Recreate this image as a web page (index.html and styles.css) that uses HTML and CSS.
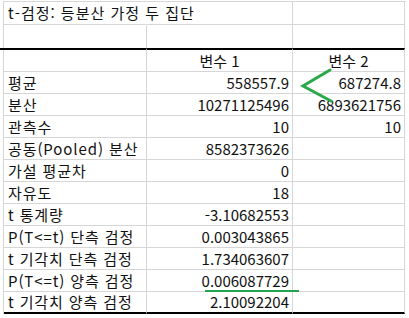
FILE: index.html
```html
<!DOCTYPE html>
<html lang="ko">
<head>
<meta charset="utf-8">
<link rel="stylesheet" href="styles.css">
</head>
<body>
<div class="sheet">
  <div class="cell title">t-검정: 등분산 가정 두 집단</div>
  <div class="cell"></div>
  <div class="cell"></div>

  <div class="cell gap"></div>
  <div class="cell gap"></div>
  <div class="cell gap"></div>

  <div class="cell head"></div>
  <div class="cell head center">변수 1</div>
  <div class="cell head center">변수 2</div>

  <div class="cell label">평균</div>
  <div class="cell num">558557.9</div>
  <div class="cell num">687274.8</div>

  <div class="cell label">분산</div>
  <div class="cell num">10271125496</div>
  <div class="cell num">6893621756</div>

  <div class="cell label">관측수</div>
  <div class="cell num">10</div>
  <div class="cell num">10</div>

  <div class="cell label">공동(Pooled) 분산</div>
  <div class="cell num">8582373626</div>
  <div class="cell"></div>

  <div class="cell label">가설 평균차</div>
  <div class="cell num">0</div>
  <div class="cell"></div>

  <div class="cell label">자유도</div>
  <div class="cell num">18</div>
  <div class="cell"></div>

  <div class="cell label">t 통계량</div>
  <div class="cell num">-3.10682553</div>
  <div class="cell"></div>

  <div class="cell label">P(T&lt;=t) 단측 검정</div>
  <div class="cell num">0.003043865</div>
  <div class="cell"></div>

  <div class="cell label">t 기각치 단측 검정</div>
  <div class="cell num">1.734063607</div>
  <div class="cell"></div>

  <div class="cell label">P(T&lt;=t) 양측 검정</div>
  <div class="cell num">0.006087729</div>
  <div class="cell"></div>

  <div class="cell label last">t 기각치 양측 검정</div>
  <div class="cell num last">2.10092204</div>
  <div class="cell last"></div>

  <svg class="mark-arrow" width="40" height="40" viewBox="0 0 40 40">
    <polyline points="30,2 3,18 31,33" fill="none" stroke="#2aa84a" stroke-width="3" stroke-linecap="round" stroke-linejoin="miter"/>
  </svg>
  <div class="mark-line"></div>
</div>
</body>
</html>
```

FILE: styles.css
```css
html, body {
  margin: 0;
  padding: 0;
  background: #ffffff;
}

body {
  font-family: "Noto Sans CJK KR", "Noto Sans", sans-serif;
  font-size: 15px;
  color: #111111;
}

.sheet {
  position: relative;
  display: grid;
  grid-template-columns: 143px 146px 112px;
  grid-auto-rows: 22px;
  grid-template-rows: 23px 23px 24px;
  margin: 1px 0 0 3px;
  width: 402px;
  border-top: 1px solid #d6d6d6;
  border-left: 1px solid #d6d6d6;
}

.sheet::before {
  content: "";
  position: absolute;
  left: -4px;
  top: 46px;
  width: 4px;
  height: 2px;
  background: #000000;
}

.cell {
  box-sizing: border-box;
  border-right: 1px solid #d6d6d6;
  border-bottom: 1px solid #d6d6d6;
  padding: 0 3px 1px 3px;
  display: flex;
  align-items: center;
  white-space: nowrap;
  line-height: 1;
}

.title {
  overflow: visible;
  border-right-color: transparent;
  position: relative;
  z-index: 1;
  letter-spacing: 1px;
  padding-left: 4px;
}

.label {
  letter-spacing: 0.9px;
  padding-left: 4px;
}

.gap {
  border-bottom: none;
}

.head {
  border-top: 2px solid #000000;
}

.center {
  justify-content: center;
}

.num {
  justify-content: flex-end;
}

.last {
  border-bottom: 2px solid #000000;
}

.mark-arrow {
  position: absolute;
  left: 296px;
  top: 66px;
}

.mark-line {
  position: absolute;
  left: 201px;
  top: 288px;
  width: 94px;
  height: 2px;
  background: #22a550;
}
```
